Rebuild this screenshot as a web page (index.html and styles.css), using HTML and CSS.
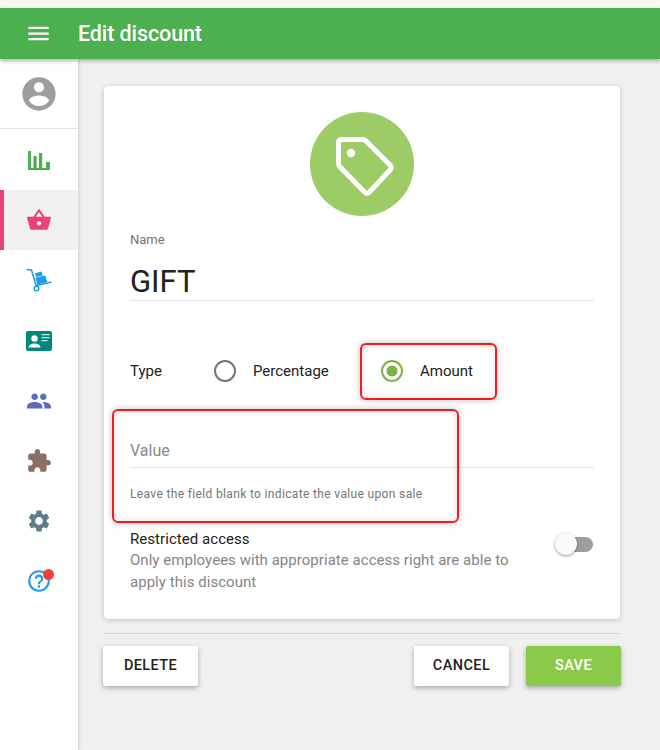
FILE: index.html
```html
<!DOCTYPE html>
<html lang="en">
  <head>
    <meta charset="UTF-8" />
    <meta name="viewport" content="width=device-width, initial-scale=1.0" />
    <title>Edit discount</title>
    <link rel="stylesheet" href="styles.css">
  </head>
  <body>
    <header class="topbar">
      <svg class="menu-icon" viewBox="0 0 24 24"><path d="M3 18h18v-2H3v2zm0-5h18v-2H3v2zm0-7v2h18V6H3z"/></svg>
      <h1>Edit discount</h1>
    </header>

    <div class="layout">
      <nav class="sidebar">
        <div class="nav-user">
          <svg viewBox="0 0 24 24" class="icon-user"><path d="M12 2C6.48 2 2 6.48 2 12s4.48 10 10 10 10-4.48 10-10S17.52 2 12 2zm0 3c1.66 0 3 1.34 3 3s-1.34 3-3 3-3-1.34-3-3 1.34-3 3-3zm0 14.2c-2.5 0-4.71-1.28-6-3.22.03-1.99 4-3.08 6-3.08 1.99 0 5.97 1.09 6 3.08-1.29 1.94-3.5 3.22-6 3.22z"/></svg>
        </div>
        <a class="nav-item">
          <svg viewBox="0 0 22 19" class="icon-green"><path d="M0 0h3v19H0zM0 17h22v2H0zM5.5 5h3.2v13H5.5zM11 2h3.2v16H11zM18 11h4v7h-4z"/></svg>
        </a>
        <a class="nav-item active">
          <svg viewBox="0 0 24 24" class="icon-pink"><path d="M17.21 9l-4.38-6.56c-.19-.28-.51-.42-.83-.42-.32 0-.64.14-.83.43L6.79 9H2c-.55 0-1 .45-1 1 0 .09.01.18.04.27l2.54 9.27c.23.84 1 1.46 1.92 1.46h13c.92 0 1.69-.62 1.93-1.46l2.54-9.27L23 10c0-.55-.45-1-1-1h-4.79zM9 9l3-4.4L15 9H9zm3 8c-1.1 0-2-.9-2-2s.9-2 2-2 2 .9 2 2-.9 2-2 2z"/></svg>
        </a>
        <a class="nav-item">
          <svg viewBox="0 0 26 24" class="icon-blue">
            <path d="M0.5 1.5L5.5 2 10 17.5l15.5-3.5" fill="none" stroke="currentColor" stroke-width="1.5"/>
            <path d="M9.3 9.8l10-2.4 2 6.6-10 2.4zM9 5.2l6.5-1.6 1.2 3.8-6.5 1.6z"/>
            <circle cx="10.5" cy="20.5" r="2.3" fill="none" stroke="currentColor" stroke-width="1.5"/>
          </svg>
        </a>
        <a class="nav-item">
          <svg viewBox="0 0 26 20" class="icon-teal">
            <rect width="26" height="20" rx="2"/>
            <circle cx="8.5" cy="7.5" r="3.2" fill="#fff"/>
            <path d="M2.5 16.5c0-2.6 3.6-3.9 6-3.9s6 1.3 6 3.9z" fill="#fff"/>
            <path d="M15.5 3h8v1.3h-8zM15.5 6h8v1.3h-8zM15.5 9h6v1.3h-6z" fill="#fff" opacity="0.8"/>
          </svg>
        </a>
        <a class="nav-item">
          <svg viewBox="0 0 24 24" class="icon-indigo"><path d="M16 11c1.66 0 2.99-1.34 2.99-3S17.66 5 16 5c-1.66 0-3 1.34-3 3s1.34 3 3 3zm-8 0c1.66 0 2.99-1.34 2.99-3S9.66 5 8 5C6.34 5 5 6.34 5 8s1.34 3 3 3zm0 2c-2.33 0-7 1.17-7 3.5V19h14v-2.5c0-2.33-4.67-3.5-7-3.5zm8 0c-.29 0-.62.02-.97.05 1.16.84 1.97 1.97 1.97 3.45V19h6v-2.5c0-2.33-4.67-3.5-7-3.5z"/></svg>
        </a>
        <a class="nav-item">
          <svg viewBox="0 0 24 24" class="icon-brown"><path d="M20.5 11H19V7c0-1.1-.9-2-2-2h-4V3.5C13 2.12 11.88 1 10.5 1S8 2.12 8 3.5V5H4c-1.1 0-1.99.9-1.99 2v3.8H3.5c1.49 0 2.7 1.21 2.7 2.7s-1.21 2.7-2.7 2.7H2V20c0 1.1.9 2 2 2h3.8v-1.5c0-1.49 1.21-2.7 2.7-2.7 1.49 0 2.7 1.21 2.7 2.7V22H17c1.1 0 2-.9 2-2v-4h1.5c1.38 0 2.5-1.12 2.5-2.5S21.88 11 20.5 11z"/></svg>
        </a>
        <a class="nav-item">
          <svg viewBox="0 0 24 24" class="icon-slate"><path d="M19.14 12.94c.04-.3.06-.61.06-.94 0-.32-.02-.64-.07-.94l2.03-1.58c.18-.14.23-.41.12-.61l-1.92-3.32c-.12-.22-.37-.29-.59-.22l-2.39.96c-.5-.38-1.03-.7-1.62-.94l-.36-2.54c-.04-.24-.24-.41-.48-.41h-3.84c-.24 0-.43.17-.47.41l-.36 2.54c-.59.24-1.13.57-1.62.94l-2.39-.96c-.22-.08-.47 0-.59.22L2.74 8.87c-.12.21-.08.47.12.61l2.03 1.58c-.05.3-.09.63-.09.94s.02.64.07.94l-2.03 1.58c-.18.14-.23.41-.12.61l1.92 3.32c.12.22.37.29.59.22l2.39-.96c.5.38 1.03.7 1.62.94l.36 2.54c.05.24.24.41.48.41h3.84c.24 0 .44-.17.47-.41l.36-2.54c.59-.24 1.13-.56 1.62-.94l2.39.96c.22.08.47 0 .59-.22l1.92-3.32c.12-.22.07-.47-.12-.61l-2.01-1.58zM12 15.6c-1.98 0-3.6-1.62-3.6-3.6s1.62-3.6 3.6-3.6 3.6 1.62 3.6 3.6-1.62 3.6-3.6 3.6z"/></svg>
        </a>
        <a class="nav-item help">
          <svg viewBox="0 0 24 24" class="icon-blue"><path d="M11 18h2v-2h-2v2zm1-16C6.48 2 2 6.48 2 12s4.48 10 10 10 10-4.48 10-10S17.52 2 12 2zm0 18c-4.41 0-8-3.59-8-8s3.59-8 8-8 8 3.59 8 8-3.59 8-8 8zm0-14c-2.21 0-4 1.79-4 4h2c0-1.1.9-2 2-2s2 .9 2 2c0 2-3 1.75-3 5h2c0-2.25 3-2.5 3-5 0-2.21-1.79-4-4-4z"/></svg>
          <span class="dot"></span>
        </a>
      </nav>

      <main class="content">
        <section class="card">
          <div class="badge">
            <svg viewBox="0 0 104 104" width="104" height="104">
              <path d="M31.5 27.5H53q1.5 0 3 1.5L80 53q2.5 2.5 0 5L59.5 80q-2.5 2.5-5 0L30 55q-1.5-1.5-1.5-3.5V31q0-3.5 3-3.5z" fill="none" stroke="#fff" stroke-width="5"/>
              <circle cx="41" cy="41" r="4.2" fill="#fff"/>
            </svg>
          </div>

          <div class="field-name">
            <label>Name</label>
            <div class="name-value">GIFT</div>
          </div>

          <div class="type-row">
            <span class="type-label">Type</span>
            <span class="radio"><span class="radio-mark"></span>Percentage</span>
            <span class="radio checked"><span class="radio-mark"></span>Amount</span>
          </div>

          <div class="field-value">
            <div class="value-input">Value</div>
            <p class="hint">Leave the field blank to indicate the value upon sale</p>
          </div>

          <div class="restricted">
            <div class="restricted-text">
              <div class="restricted-title">Restricted access</div>
              <div class="restricted-desc">Only employees with appropriate access right are able to apply this discount</div>
            </div>
            <span class="switch"><span class="switch-thumb"></span></span>
          </div>

          <div class="mark mark-amount"></div>
          <div class="mark mark-value"></div>
        </section>

        <div class="divider"></div>

        <div class="actions">
          <button>DELETE</button>
          <span class="spacer"></span>
          <button>CANCEL</button>
          <button class="primary">SAVE</button>
        </div>
      </main>
    </div>
  </body>
</html>
```

FILE: styles.css
```css
* {
  box-sizing: border-box;
}

html,
body {
  height: 100%;
}

body {
  margin: 0;
  padding-top: 8px;
  overflow: hidden;
  font-family: Roboto, "Liberation Sans", sans-serif;
  color: #212121;
  background-color: #f7f8f1;
}

.topbar {
  position: relative;
  z-index: 2;
  display: flex;
  align-items: center;
  height: 51px;
  padding-left: 25px;
  background: #4caf50;
  color: white;
  box-shadow: 0 2px 4px rgba(0, 0, 0, 0.3);
}

.topbar h1 {
  margin: 0 0 0 26px;
  font-size: 21.5px;
  font-weight: 500;
  letter-spacing: -0.1px;
}

.menu-icon {
  width: 27px;
  height: 27px;
  fill: white;
}

.layout {
  display: flex;
  height: 691px;
  background: #f0f0f0;
}

.sidebar {
  flex: none;
  width: 78px;
  background: white;
  box-shadow: 1px 0 3px rgba(0, 0, 0, 0.15);
}

.nav-user {
  display: flex;
  align-items: center;
  justify-content: center;
  height: 70px;
  margin-bottom: 1px;
  border-bottom: 1px solid #e4e4e4;
}

.nav-user svg {
  width: 40px;
  height: 40px;
}

.nav-item {
  position: relative;
  display: flex;
  align-items: center;
  justify-content: center;
  height: 60.2px;
}

.nav-item svg {
  width: 26px;
  height: 26px;
  fill: currentColor;
}

.nav-item.active {
  background: #f0f0f0;
  border-left: 4px solid #ec407a;
  padding-right: 4px;
}

.icon-user { fill: #9e9e9e; }
.icon-green { color: #4caf50; }
.icon-pink { color: #ec407a; }
.icon-blue { color: #1e9be9; }
.icon-teal { color: #00897b; }
.icon-indigo { color: #5c6bc0; }
.icon-brown { color: #8d6e63; }
.icon-slate { color: #607d8b; }

.nav-item svg.icon-green {
  width: 22px;
  height: 19px;
}

.dot {
  position: absolute;
  top: 18px;
  left: 43px;
  width: 11px;
  height: 11px;
  border-radius: 50%;
  background: #f44336;
}

.content {
  flex: 1;
  padding: 27px 40px 0 26px;
}

.card {
  position: relative;
  height: 533px;
  padding: 26px 26px 0;
  background: white;
  border-radius: 4px;
  box-shadow: 0 1px 5px rgba(0, 0, 0, 0.2);
}

.badge {
  width: 104px;
  height: 104px;
  margin: 0 auto;
  border-radius: 50%;
  background: #9ccc65;
}

.field-name {
  margin-top: 16px;
}

.field-name label {
  display: block;
  font-size: 13px;
  line-height: 16px;
  color: #757575;
}

.name-value {
  padding-top: 16px;
  font-size: 31px;
  line-height: 36px;
  border-bottom: 1px solid #e6e6e6;
}

.type-row {
  display: flex;
  align-items: center;
  height: 56px;
  margin-top: 42px;
  font-size: 15px;
}

.type-label {
  width: 84px;
}

.radio {
  display: flex;
  align-items: center;
  width: 167px;
}

.radio-mark {
  flex: none;
  width: 22px;
  height: 22px;
  margin-right: 17px;
  border: 2px solid #757575;
  border-radius: 50%;
}

.checked .radio-mark {
  border-color: #7cb342;
  background: radial-gradient(circle, #7cb342 0 5.2px, white 5.8px);
}

.field-value {
  margin-top: 28px;
}

.value-input {
  height: 41px;
  padding-top: 14px;
  font-size: 16px;
  line-height: 19px;
  color: #8a8a8a;
  border-bottom: 1px solid #e6e6e6;
}

.hint {
  margin: 18px 0 0;
  font-size: 12px;
  line-height: 16px;
  letter-spacing: 0.35px;
  color: #757575;
}

.restricted {
  display: flex;
  justify-content: space-between;
  margin-top: 28px;
}

.restricted-text {
  width: 400px;
}

.restricted-title {
  font-size: 15px;
  line-height: 18px;
  letter-spacing: 0.05px;
}

.restricted-desc {
  margin-top: 1px;
  font-size: 15px;
  line-height: 22px;
  letter-spacing: 0.04px;
  color: #858585;
}

.switch {
  position: relative;
  flex: none;
  width: 34px;
  height: 15px;
  margin: 7px 1px 0 0;
  border-radius: 8px;
  background: #9e9e9e;
}

.switch-thumb {
  position: absolute;
  top: -4px;
  left: -4px;
  width: 22px;
  height: 22px;
  border-radius: 50%;
  background: #fafafa;
  box-shadow: 0 1px 3px rgba(0, 0, 0, 0.4);
}

/* red annotation boxes drawn over the form */
.mark {
  position: absolute;
  border: 2px solid #f01c24;
  border-radius: 6px;
  box-shadow: 0 0 6px rgba(0, 0, 0, 0.25), inset 0 0 6px rgba(0, 0, 0, 0.15);
  pointer-events: none;
}

.mark-amount {
  top: 257px;
  left: 256px;
  width: 137px;
  height: 57px;
}

.mark-value {
  top: 323px;
  left: 8px;
  width: 347px;
  height: 114px;
}

.divider {
  height: 1px;
  margin-top: 14px;
  background: #d6d6d6;
}

.actions {
  display: flex;
  gap: 17px;
  margin: 12px -1px 0;
}

.spacer {
  flex: 1;
}

button {
  width: 95px;
  height: 40px;
  padding: 0 0 1px;
  border: none;
  border-radius: 2px;
  font-family: inherit;
  font-size: 14.5px;
  font-weight: 500;
  letter-spacing: 0.4px;
  color: #212121;
  background: white;
  box-shadow: 0 2px 5px rgba(0, 0, 0, 0.3);
}

button.primary {
  color: white;
  background: #8bc94a;
}
```
